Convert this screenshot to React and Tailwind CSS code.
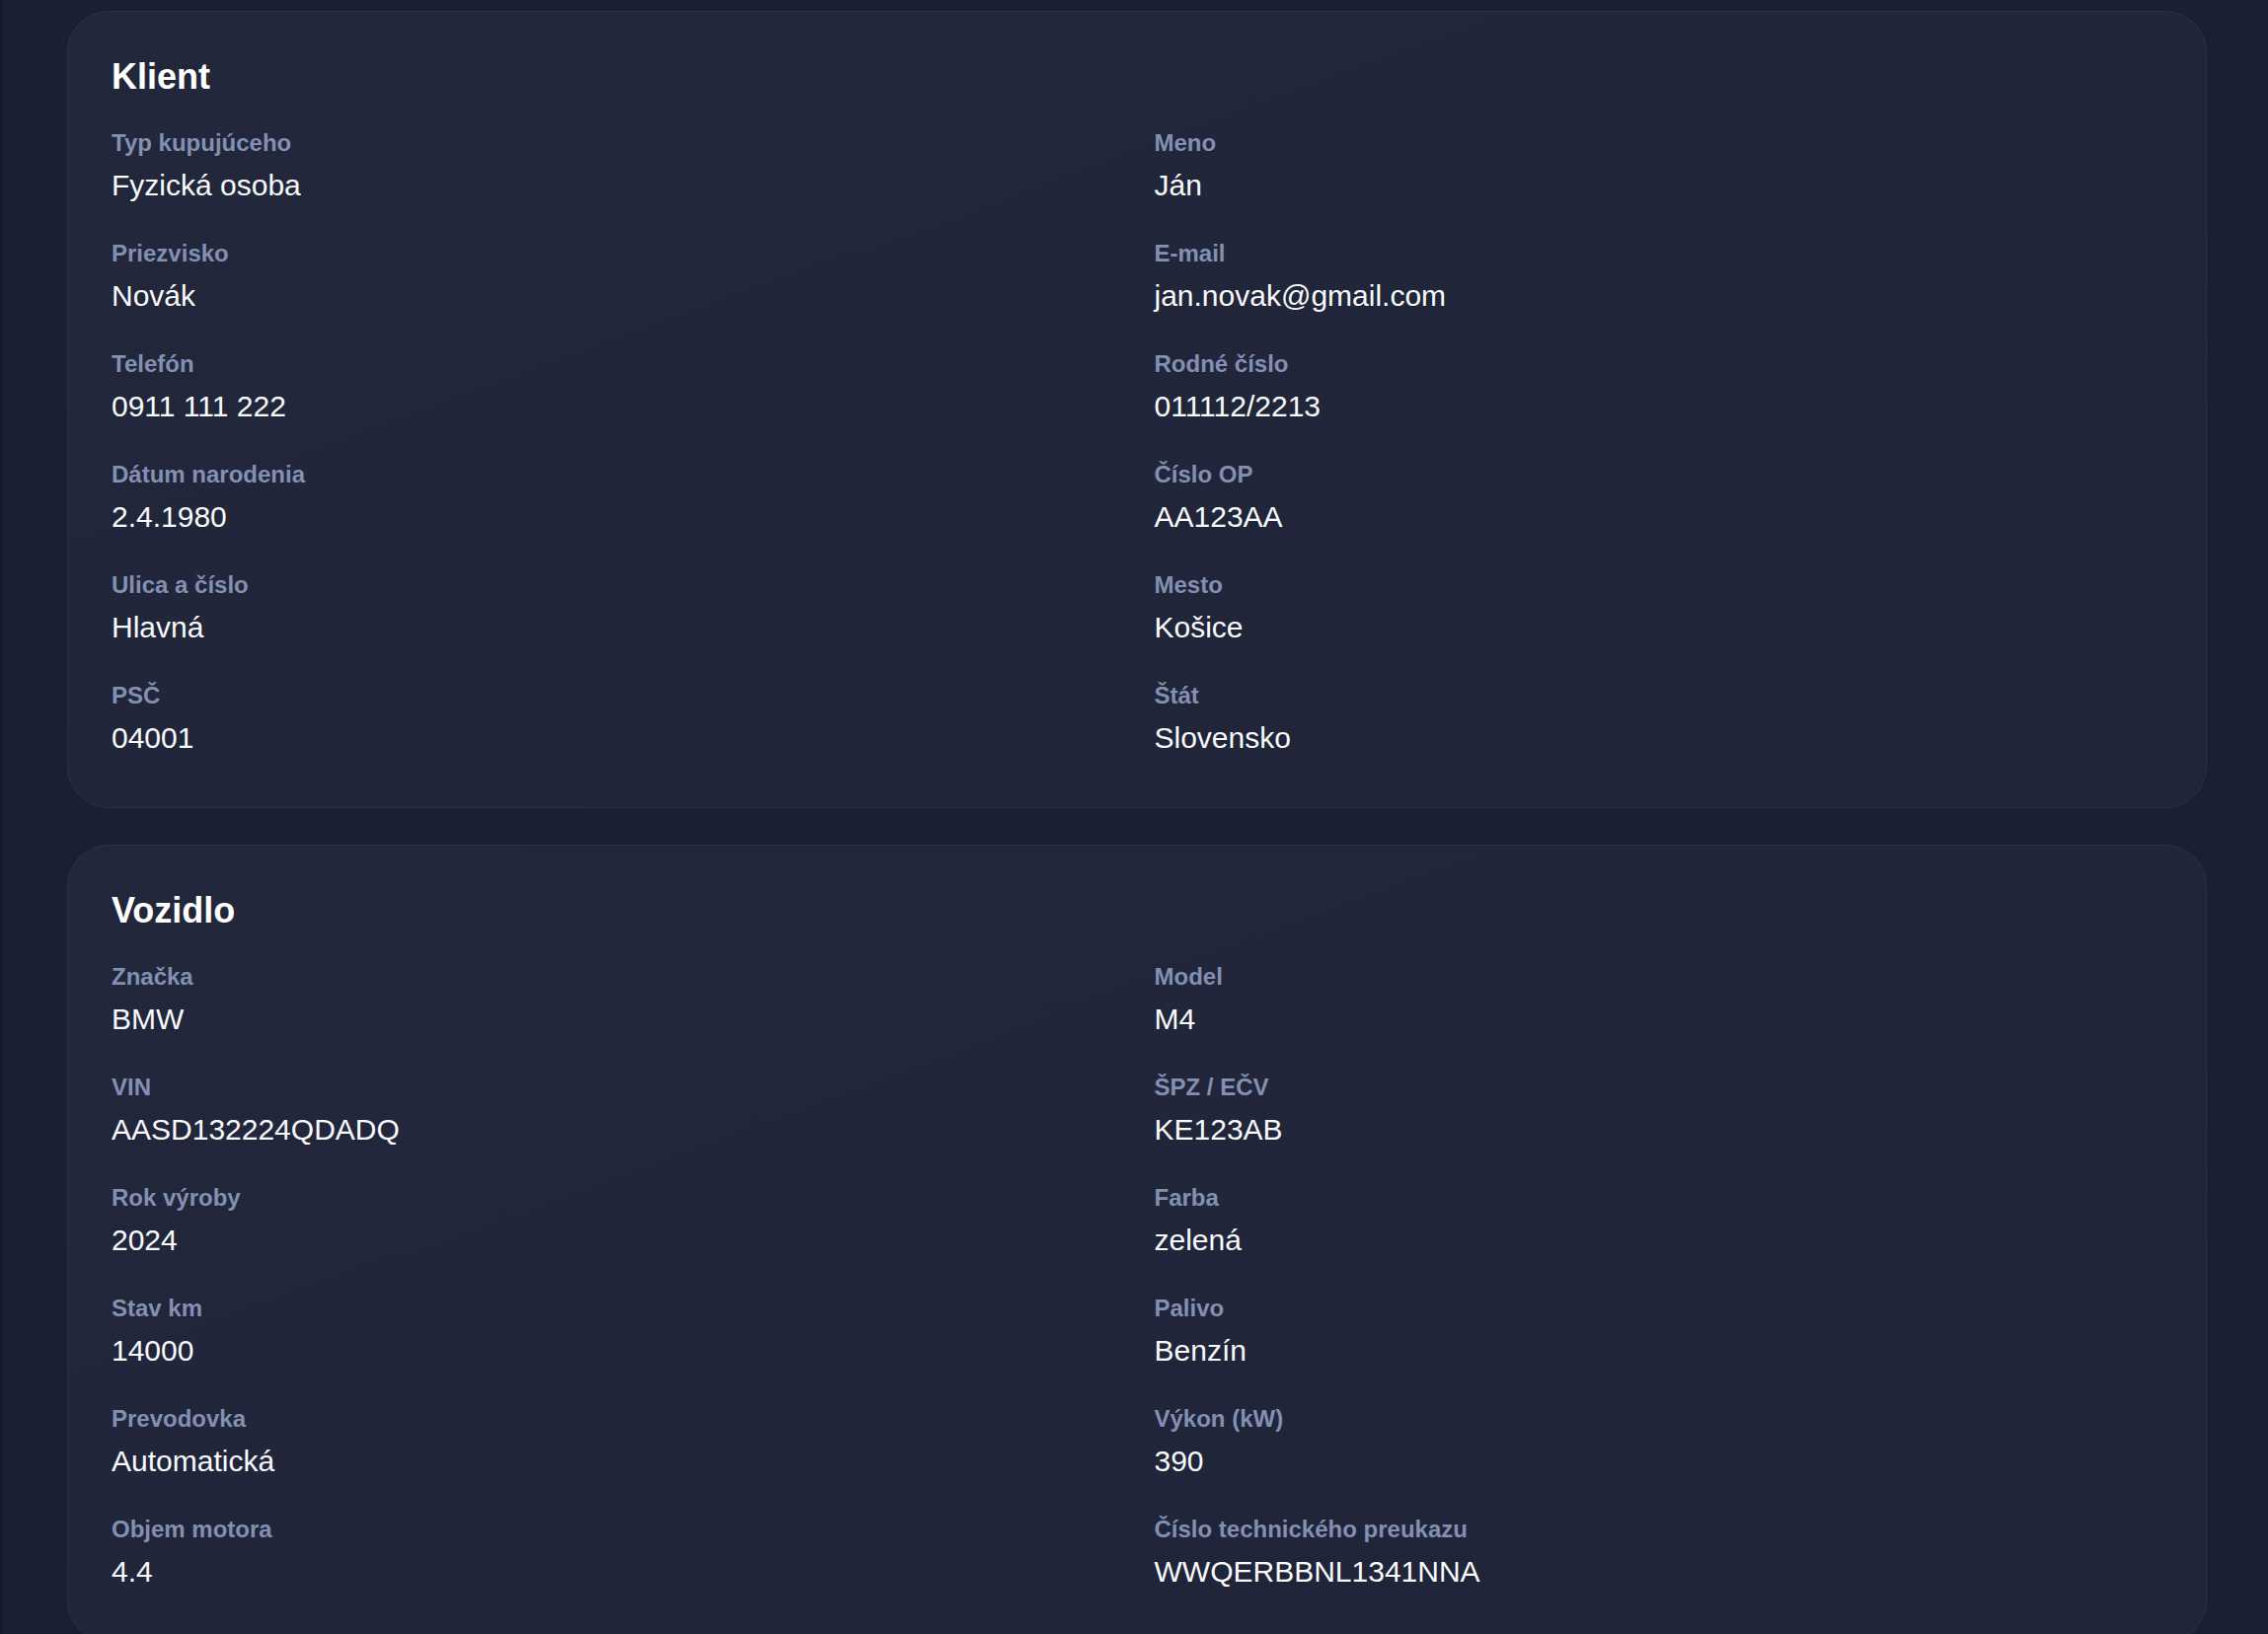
import React from "react";

const klient = [
  ["Typ kupujúceho", "Fyzická osoba"],
  ["Meno", "Ján"],
  ["Priezvisko", "Novák"],
  ["E-mail", "jan.novak@gmail.com"],
  ["Telefón", "0911 111 222"],
  ["Rodné číslo", "011112/2213"],
  ["Dátum narodenia", "2.4.1980"],
  ["Číslo OP", "AA123AA"],
  ["Ulica a číslo", "Hlavná"],
  ["Mesto", "Košice"],
  ["PSČ", "04001"],
  ["Štát", "Slovensko"],
];

const vozidlo = [
  ["Značka", "BMW"],
  ["Model", "M4"],
  ["VIN", "AASD132224QDADQ"],
  ["ŠPZ / EČV", "KE123AB"],
  ["Rok výroby", "2024"],
  ["Farba", "zelená"],
  ["Stav km", "14000"],
  ["Palivo", "Benzín"],
  ["Prevodovka", "Automatická"],
  ["Výkon (kW)", "390"],
  ["Objem motora", "4.4"],
  ["Číslo technického preukazu", "WWQERBBNL1341NNA"],
];

function Card({ title, items }) {
  return (
    <section className="rounded-[42px] border border-[#2c3246] bg-gradient-to-br from-[#22273c] to-[#1f2438] pt-[42px] pl-[44px] pr-[44px] pb-[50px]">
      <h2 className="text-[36px] leading-[47px] font-bold text-white mb-[26px]">{title}</h2>
      <div className="grid grid-cols-2 gap-x-[35px] gap-y-[31px]">
        {items.map(([label, value]) => (
          <div key={label} className="flex flex-col">
            <div className="text-[24px] leading-[35px] font-bold text-[#8390b2]">{label}</div>
            <div className="mt-[5px] text-[30px] leading-[41px] text-[#f8fafc]">{value}</div>
          </div>
        ))}
      </div>
    </section>
  );
}

export default function App() {
  return (
    <div
      className="min-h-screen bg-[#1b1f33] border-l-2 border-[#12172a] pt-[11px] pl-[66px] pr-[62px] pb-10 flex flex-col gap-[37px]"
      style={{ fontFamily: '"Liberation Sans", Arial, sans-serif' }}
    >
      <Card title="Klient" items={klient} />
      <Card title="Vozidlo" items={vozidlo} />
    </div>
  );
}
